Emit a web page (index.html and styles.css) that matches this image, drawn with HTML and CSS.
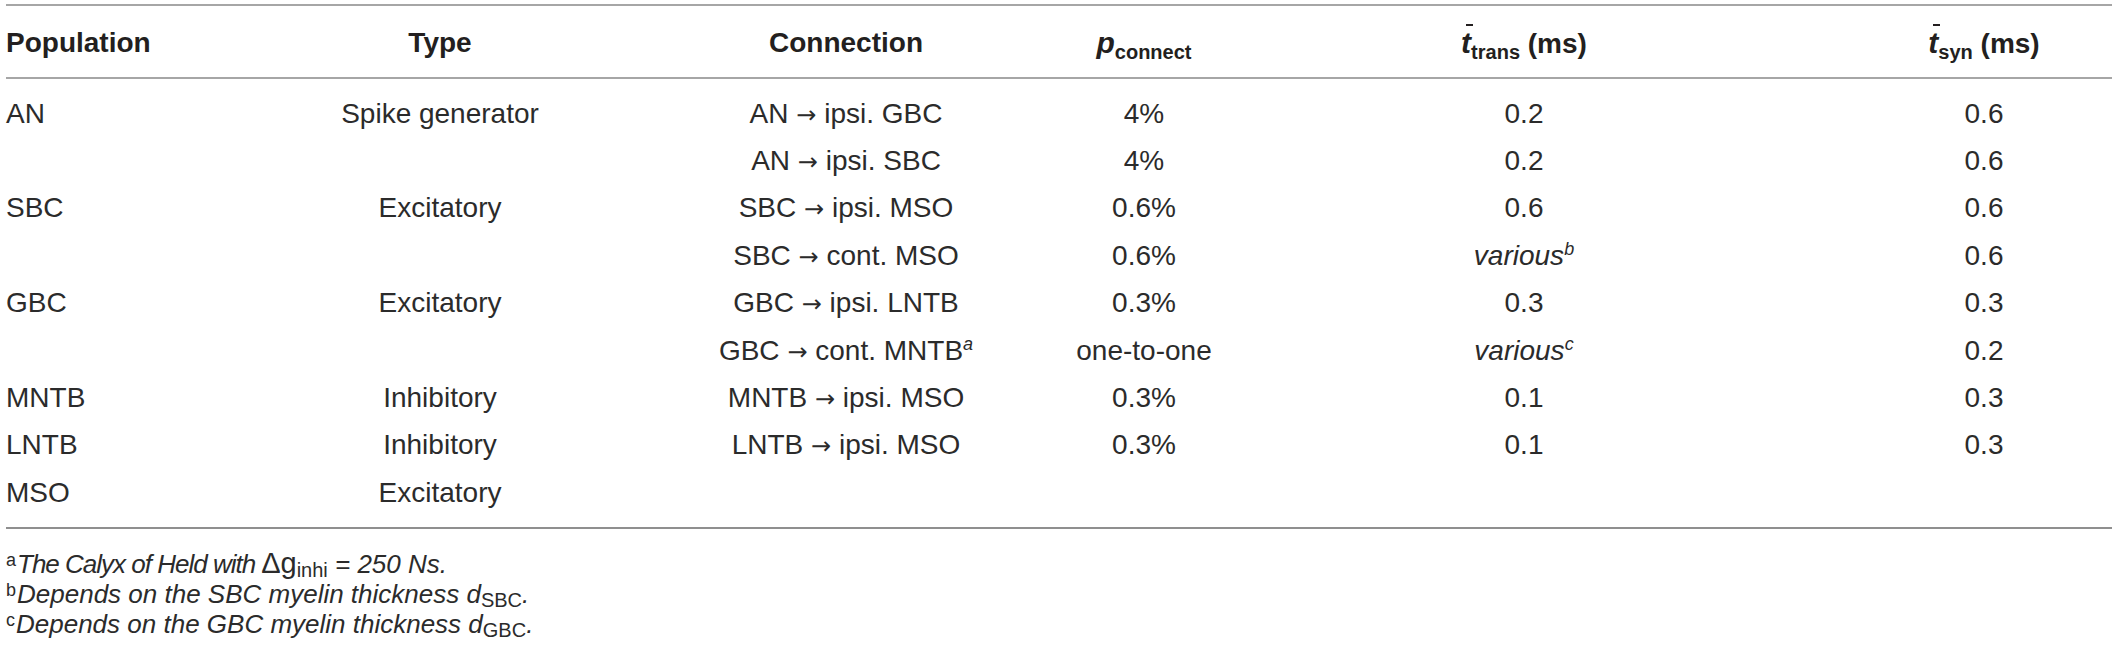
FILE: index.html
```html
<!DOCTYPE html>
<html lang="en">
<head>
<meta charset="utf-8">
<title>Network connections</title>
<link rel="stylesheet" href="styles.css">
</head>
<body>
<div class="table">
  <div class="row head">
    <div class="c pop">Population</div>
    <div class="c type">Type</div>
    <div class="c conn">Connection</div>
    <div class="c prob"><i class="sym">p</i><sub>connect</sub></div>
    <div class="c trans"><i class="sym bar">t</i><sub>trans</sub> (ms)</div>
    <div class="c syn"><i class="sym bar">t</i><sub>syn</sub> (ms)</div>
  </div>
  <div class="tbody">
    <div class="row"><div class="c pop">AN</div><div class="c type">Spike generator</div><div class="c conn">AN <span class="arr">→</span> ipsi. GBC</div><div class="c prob">4%</div><div class="c trans">0.2</div><div class="c syn">0.6</div></div>
    <div class="row"><div class="c conn">AN <span class="arr">→</span> ipsi. SBC</div><div class="c prob">4%</div><div class="c trans">0.2</div><div class="c syn">0.6</div></div>
    <div class="row"><div class="c pop">SBC</div><div class="c type">Excitatory</div><div class="c conn">SBC <span class="arr">→</span> ipsi. MSO</div><div class="c prob">0.6%</div><div class="c trans">0.6</div><div class="c syn">0.6</div></div>
    <div class="row"><div class="c conn">SBC <span class="arr">→</span> cont. MSO</div><div class="c prob">0.6%</div><div class="c trans"><i>various</i><sup>b</sup></div><div class="c syn">0.6</div></div>
    <div class="row"><div class="c pop">GBC</div><div class="c type">Excitatory</div><div class="c conn">GBC <span class="arr">→</span> ipsi. LNTB</div><div class="c prob">0.3%</div><div class="c trans">0.3</div><div class="c syn">0.3</div></div>
    <div class="row"><div class="c conn">GBC <span class="arr">→</span> cont. MNTB<sup>a</sup></div><div class="c prob">one-to-one</div><div class="c trans"><i>various</i><sup>c</sup></div><div class="c syn">0.2</div></div>
    <div class="row"><div class="c pop">MNTB</div><div class="c type">Inhibitory</div><div class="c conn">MNTB <span class="arr">→</span> ipsi. MSO</div><div class="c prob">0.3%</div><div class="c trans">0.1</div><div class="c syn">0.3</div></div>
    <div class="row"><div class="c pop">LNTB</div><div class="c type">Inhibitory</div><div class="c conn">LNTB <span class="arr">→</span> ipsi. MSO</div><div class="c prob">0.3%</div><div class="c trans">0.1</div><div class="c syn">0.3</div></div>
    <div class="row"><div class="c pop">MSO</div><div class="c type">Excitatory</div></div>
  </div>
  <div class="notes">
    <p class="note"><span class="mark">a</span><i class="tight">The Calyx of Held with</i><span class="up">Δg<sub>inhi</sub></span> <i>= 250 Ns.</i></p>
    <p class="note"><span class="mark">b</span><i>Depends on the SBC myelin thickness d</i><sub>SBC</sub><i>.</i></p>
    <p class="note"><span class="mark">c</span><i>Depends on the GBC myelin thickness d</i><sub>GBC</sub><i>.</i></p>
  </div>
</div>
</body>
</html>
```
FILE: styles.css
```css
html, body {
  margin: 0;
  padding: 0;
  background: #ffffff;
}

body {
  color: #2b2b2b;
  font-family: "Liberation Sans", Arial, sans-serif;
  font-size: 28px;
}

.table {
  width: 2106px;
  padding: 4px 0 0 6px;
}

.row {
  display: grid;
  grid-template-columns: 200px 134px 200px 146px 320px 58px 160px 200px 200px 260px 200px 1fr;
  height: 47.4px;
  align-items: center;
}

.c {
  white-space: nowrap;
  text-align: center;
  line-height: 1;
}

.pop { grid-column: 1; text-align: left; }
.type { grid-column: 3; }
.conn { grid-column: 5; }
.prob { grid-column: 7; }
.trans { grid-column: 9; }
.syn { grid-column: 11; }

.arr {
  font-family: "DejaVu Sans", sans-serif;
  font-size: 24px;
}

.head {
  height: 69px;
  border-top: 2px solid #a6a6a6;
  border-bottom: 2px solid #a6a6a6;
  font-weight: bold;
  color: #231f20;
  padding-top: 2px;
  box-sizing: content-box;
}

.head sub {
  font-size: 20px;
  vertical-align: -6px;
  line-height: 0;
}

.sym {
  font-style: italic;
  font-weight: bold;
  font-size: 30px;
}

.bar {
  position: relative;
}

.bar::before {
  content: "";
  position: absolute;
  left: 5px;
  top: -2px;
  width: 7px;
  height: 2px;
  background: currentColor;
}

.tbody {
  padding: 11px 0 10px;
  border-bottom: 2px solid #8f8f8f;
}

.tbody sup {
  font-size: 18px;
  font-style: italic;
  vertical-align: 10px;
  line-height: 0;
}

.notes {
  padding-top: 19px;
  font-size: 26px;
}

.note {
  margin: 0;
  line-height: 30px;
  white-space: nowrap;
}

.tight {
  letter-spacing: -1px;
  margin-right: 6px;
}

.mark {
  font-size: 18px;
  vertical-align: 7px;
  line-height: 0;
  margin-right: 1px;
}

.up {
  font-size: 29px;
}

.note sub {
  font-size: 20px;
  vertical-align: -4px;
  line-height: 0;
  font-style: normal;
}
```
